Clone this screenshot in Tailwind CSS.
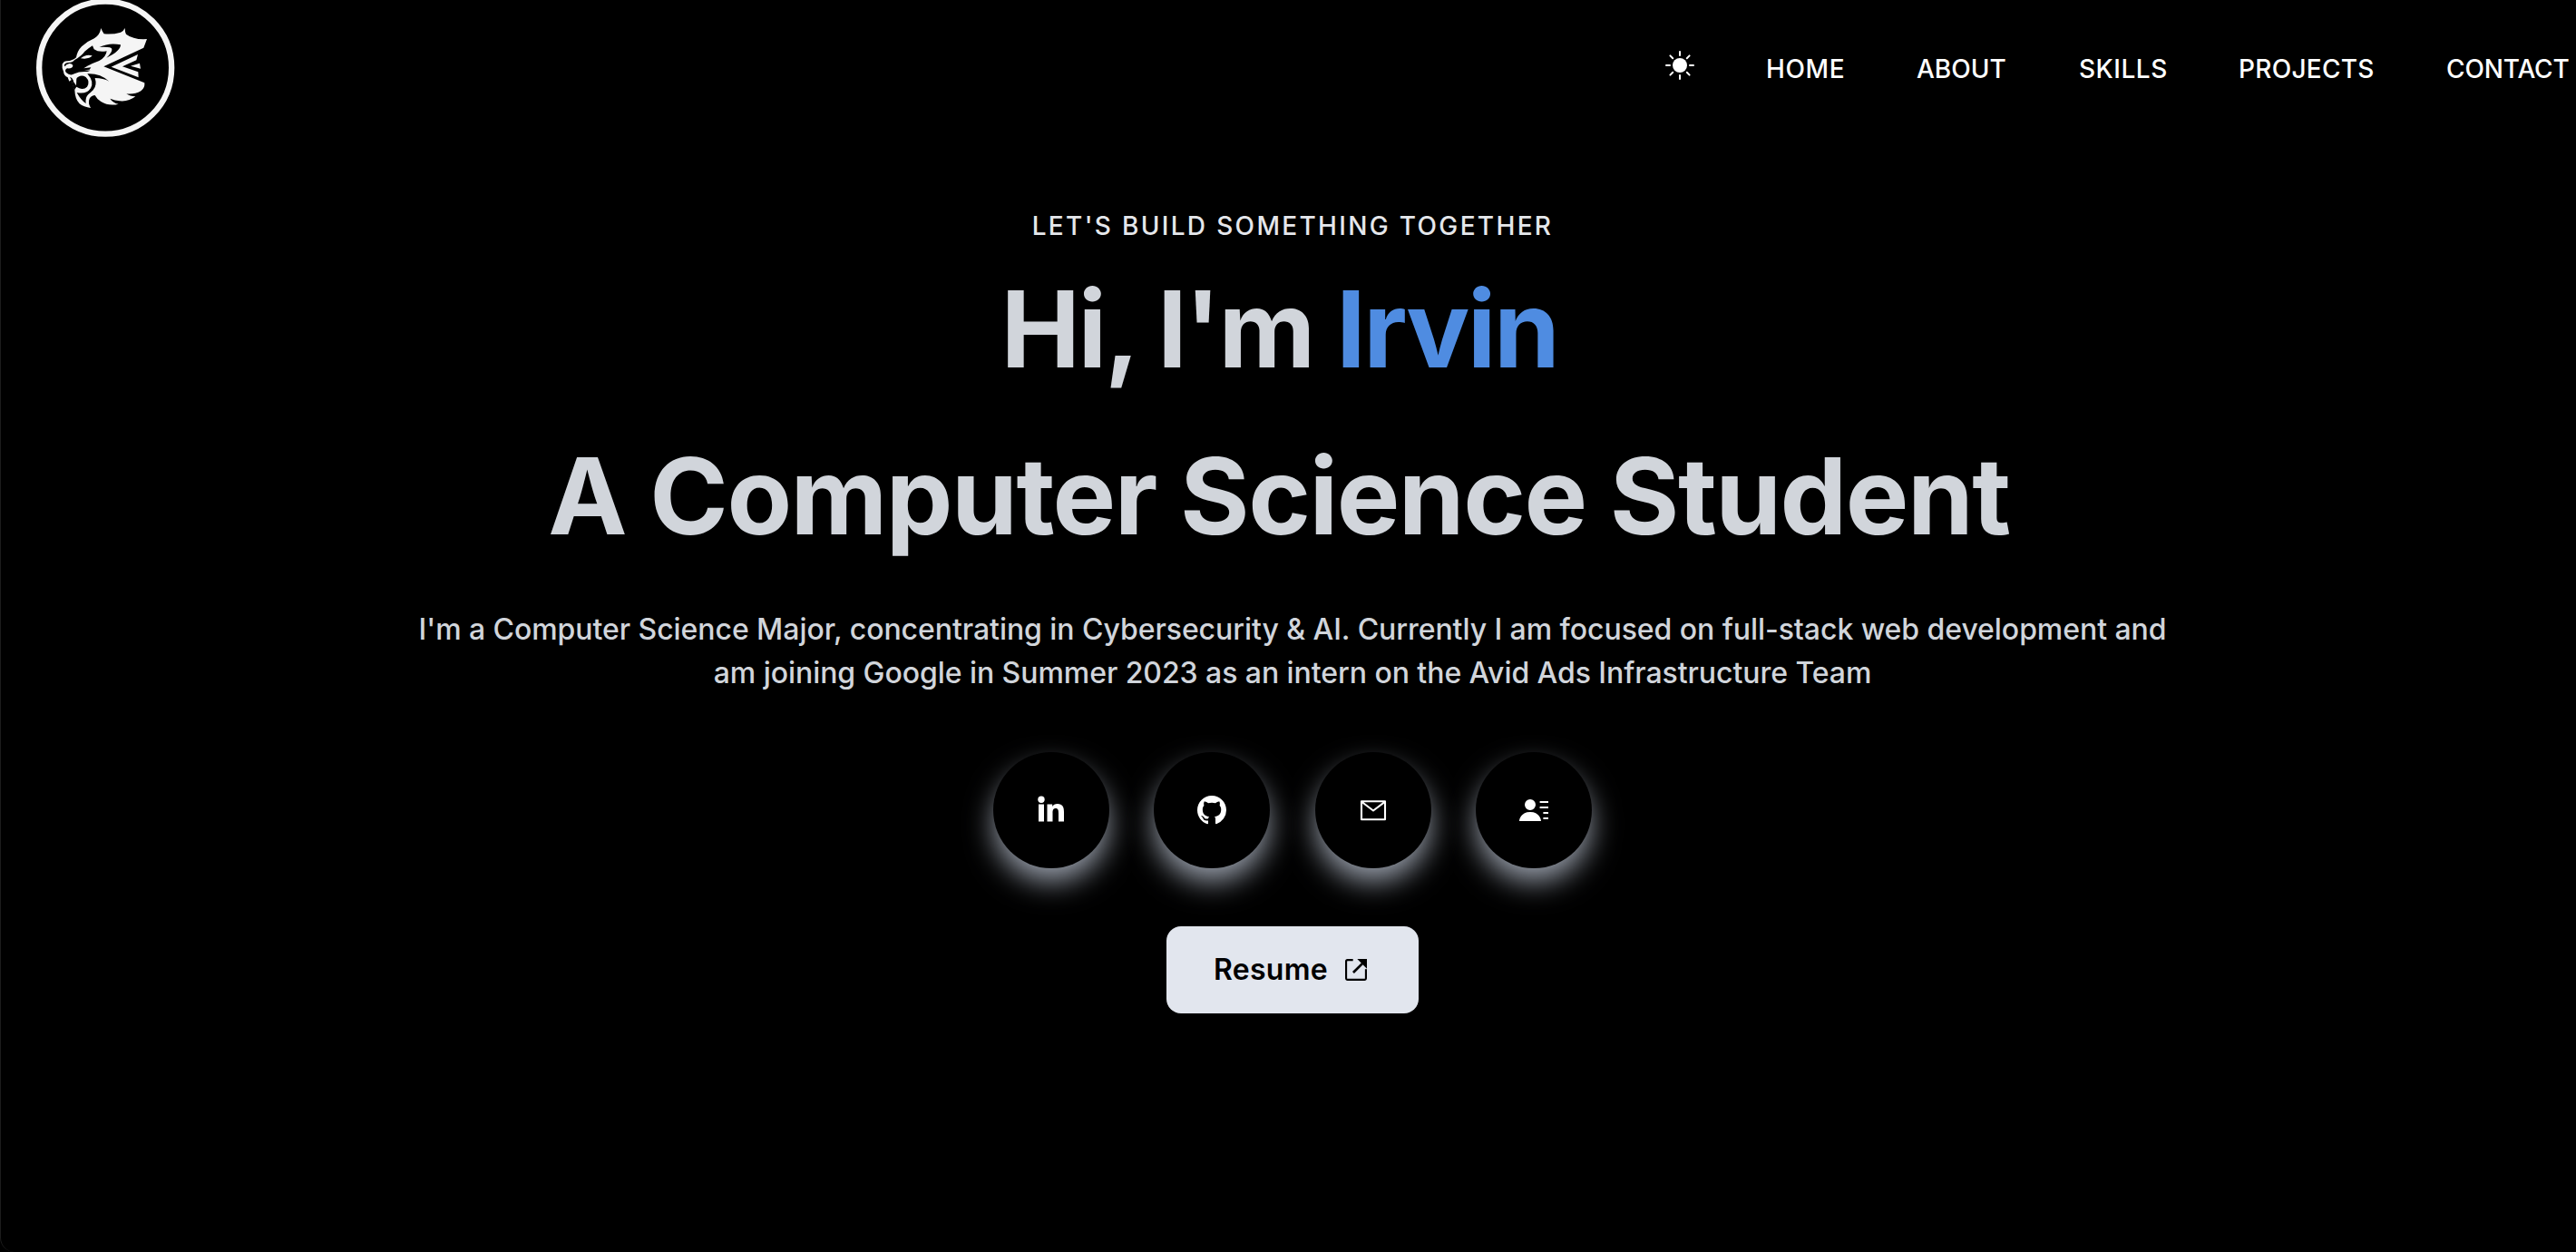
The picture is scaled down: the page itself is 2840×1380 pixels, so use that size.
<!DOCTYPE html>
<html lang="en">
<head>
<meta charset="utf-8">
<title>Irvin | Portfolio</title>
<script src="https://cdn.jsdelivr.net/npm/@tailwindcss/browser@4"></script>
</head>
<body class="bg-black">
<div class="h-[1380px] w-full overflow-hidden rounded-bl-[16px] border-l border-[#1c1c1c] bg-black font-['Inter',sans-serif]">
  <header class="flex h-[152px] items-center">
    <a href="#" class="block h-[152px] w-[240px] shrink-0">
      <svg class="-ml-px block h-[170px] w-[240px]" viewBox="0 0 720 510">
        <circle cx="348.500" cy="224" r="219" fill="none" stroke="#f5f5f5" stroke-width="19"/>
        <path fill="#f5f5f5" d="M206 212Q212 201 222 202Q240 201 252 190Q256 168 270 154Q291 135 312 127Q330 116 334 93Q338 104 344 112Q372 115 399 107Q408 104 413 93Q413 105 417 113Q442 132 486 129L475 158L343 220L478 274Q480 291 466 301Q445 313 418 310Q430 319 448 319Q426 337 396 334Q380 333 364 326Q373 340 392 344Q360 352 334 336Q320 327 314 315Q303 315 296 326Q290 340 300 357Q277 354 263 343Q248 328 247 298L242 284L236 264L229 269L224 256Q211 250 210 236Q204 226 206 212Z"/>
        <path fill="#f5f5f5" d="M368 221L456 180L451 199L405 220L457 238L458 256Z M432 218L462 209L465 227Z"/>
        <path d="M247 198Q272 183 280 170Q292 160 306 151L311 163Q326 174 353 169Q351 189 328 201Q309 208 289 218L277 226L301 223L296 230L278 232L299 233L289 237Q262 235 246 244Q232 252 219 240Q212 232 222 226Q238 228 241 219Q242 211 229 210Q218 212 215 220L212 215Q216 207 225 207Q239 208 247 198Z"/>
        <path fill="#f5f5f5" d="M267 193Q284 178 305 184Q295 197 267 193Z"/>
        <path d="M329 156Q361 140 399 148Q399 169 352 191Q372 173 370 162Q369 154 329 156Z"/>
        <path d="M231 254Q238 255 243 266L251 262Q265 244 284 255Q299 270 288 287Q278 297 262 292L253 287L246 298L240 281L236 264Z"/>
        <path fill="#f5f5f5" d="M242 258L253 257L252 283L243 270Z"/>
        <path d="M289 244Q331 242 361 269Q342 258 314 258Q322 282 308 298Q299 307 292 312Q281 323 284 342Q268 332 254 306Q286 313 300 292Q312 270 289 244Z"/>
      </svg>
    </a>
    <nav class="ml-auto flex shrink-0 items-center text-[28px] leading-10 font-medium whitespace-nowrap text-white">
      <svg class="-mt-2 mr-[79px] size-8" viewBox="0 0 16 16" fill="white"><circle cx="8" cy="8" r="4"/><path d="M8 0a.5.5 0 0 1 .5.5v2a.5.5 0 0 1-1 0v-2A.5.5 0 0 1 8 0m0 13a.5.5 0 0 1 .5.5v2a.5.5 0 0 1-1 0v-2A.5.5 0 0 1 8 13m8-5a.5.5 0 0 1-.5.5h-2a.5.5 0 0 1 0-1h2a.5.5 0 0 1 .5.5M3 8a.5.5 0 0 1-.5.5h-2a.5.5 0 0 1 0-1h2A.5.5 0 0 1 3 8m10.657-5.657a.5.5 0 0 1 0 .707l-1.414 1.415a.5.5 0 1 1-.707-.708l1.414-1.414a.5.5 0 0 1 .707 0m-9.193 9.193a.5.5 0 0 1 0 .707L3.050 13.657a.5.5 0 0 1-.707-.707l1.414-1.414a.5.5 0 0 1 .707 0m9.193 2.121a.5.5 0 0 1-.707 0l-1.414-1.414a.5.5 0 0 1 .707-.707l1.414 1.414a.5.5 0 0 1 0 .707M4.464 4.465a.5.5 0 0 1-.707 0L2.343 3.050a.5.5 0 1 1 .707-.707l1.414 1.414a.5.5 0 0 1 0 .708"/></svg>
      <a href="#" class="w-[166px] tracking-[0.6px]">HOME</a>
      <a href="#" class="w-[179px] tracking-[0.02px]">ABOUT</a>
      <a href="#" class="w-[176px] tracking-[0.5px]">SKILLS</a>
      <a href="#" class="w-[229px] tracking-[0.28px]">PROJECTS</a>
      <a href="#" class="w-[143px] tracking-[-0.15px]">CONTACT</a>
    </nav>
  </header>

  <main class="flex flex-col items-center pt-[77px] pl-[9px] text-center whitespace-nowrap">
    <p class="text-[28px] leading-10 font-medium tracking-[2.330px] text-gray-200">LET'S BUILD SOMETHING TOGETHER</p>
    <h1 class="mt-[34px] mr-[29px] text-[117px] leading-[120px] font-bold tracking-[-2.5px] text-[#d1d5db]">Hi, I'm <span class="text-[#4f8ce1]">Irvin</span></h1>
    <h1 class="mt-[64px] mr-[30px] text-[117px] leading-[120px] font-bold tracking-[-1.52px] text-[#d1d5db]">A Computer Science Student</h1>
    <p class="mt-[63px] text-[32px] leading-[48px] font-medium tracking-[-0.060px] text-[#d1d5db]">I'm a Computer Science Major, concentrating in Cybersecurity &amp; AI. Currently I am focused on full-stack web development and<br>am joining Google in Summer 2023 as an intern on the Avid Ads Infrastructure Team</p>
    <div class="mt-[63px] flex gap-[49.300px]">
      <a href="#" class="flex size-32 items-center justify-center rounded-full bg-black shadow-[0_16px_32px_-2px_#9ca3af]">
        <svg class="size-8" viewBox="0 0 32 32" fill="white"><circle cx="5" cy="4.200" r="3.700"/><path d="M2 9.500h6V28.500h-6zM11.500 9.500h5.700v2.600c1-1.800 3-3 5.600-3 5.700 0 7.200 3.500 7.200 8.800V28.500h-6v-9.300c0-2.600-.3-5.100-3.100-5.100-2.900 0-3.400 2.200-3.400 4.900v9.500h-6z"/></svg>
      </a>
      <a href="#" class="flex size-32 items-center justify-center rounded-full bg-black shadow-[0_16px_32px_-2px_#9ca3af]">
        <svg class="size-8" viewBox="0 0 16 16" fill="white"><path d="M8 0C3.580 0 0 3.580 0 8c0 3.540 2.290 6.530 5.470 7.590.4.070.55-.17.55-.38 0-.19-.01-.82-.01-1.490-2.010.37-2.530-.49-2.690-.94-.09-.23-.48-.94-.82-1.130-.28-.15-.68-.52-.01-.53.63-.01 1.080.58 1.230.82.72 1.210 1.870.87 2.330.66.07-.52.28-.87.51-1.070-1.780-.2-3.640-.89-3.640-3.950 0-.87.31-1.590.82-2.150-.08-.2-.36-1.020.08-2.120 0 0 .67-.21 2.200.82.64-.18 1.320-.27 2-.27s1.360.09 2 .27c1.530-1.040 2.200-.82 2.200-.82.44 1.100.16 1.920.08 2.120.51.56.82 1.270.82 2.150 0 3.070-1.870 3.750-3.650 3.950.29.25.54.73.54 1.480 0 1.070-.01 1.930-.01 2.200 0 .21.15.46.55.38A8.010 8.010 0 0 0 16 8c0-4.420-3.580-8-8-8"/></svg>
      </a>
      <a href="#" class="flex size-32 items-center justify-center rounded-full bg-black shadow-[0_16px_32px_-2px_#9ca3af]">
        <svg class="size-8" viewBox="0 0 32 32" fill="none" stroke="white" stroke-width="2.100" stroke-linejoin="round"><path d="M3 6.300h26v20H3zM3.500 7L16 16.500 28.500 7"/></svg>
      </a>
      <a href="#" class="flex size-32 items-center justify-center rounded-full bg-black shadow-[0_16px_32px_-2px_#9ca3af]">
        <svg class="size-8" viewBox="0 0 16 16" fill="white"><path d="M6 8a3 3 0 1 0 0-6 3 3 0 0 0 0 6m-6 6c0-1 1-5 6-5s6 4 6 5zM11.300 3h4.700v1h-4.700zM11.300 6h4.700v1h-4.700zM13.200 9h2.800v1h-2.800zM13.200 12h2.800v1h-2.800z"/></svg>
      </a>
    </div>
    <a href="#" class="mt-16 flex h-24 w-[278px] items-center rounded-2xl bg-[#e2e6ee] pl-[52px] text-[32px] leading-10 font-semibold tracking-[0.3px] text-black">Resume
      <svg class="ml-[15px] size-8" viewBox="0 0 24 24"><path d="M9.500 3.800H5a1.200 1.200 0 0 0-1.200 1.200v14a1.200 1.200 0 0 0 1.200 1.200h14a1.200 1.200 0 0 0 1.200-1.200v-7.500" fill="none" stroke="black" stroke-width="1.600"/><path d="M9.700 14.300L18.500 5.500" stroke="black" stroke-width="2"/><path d="M13 3h8v8z"/></svg>
    </a>
  </main>
</div>
</body>
</html>
